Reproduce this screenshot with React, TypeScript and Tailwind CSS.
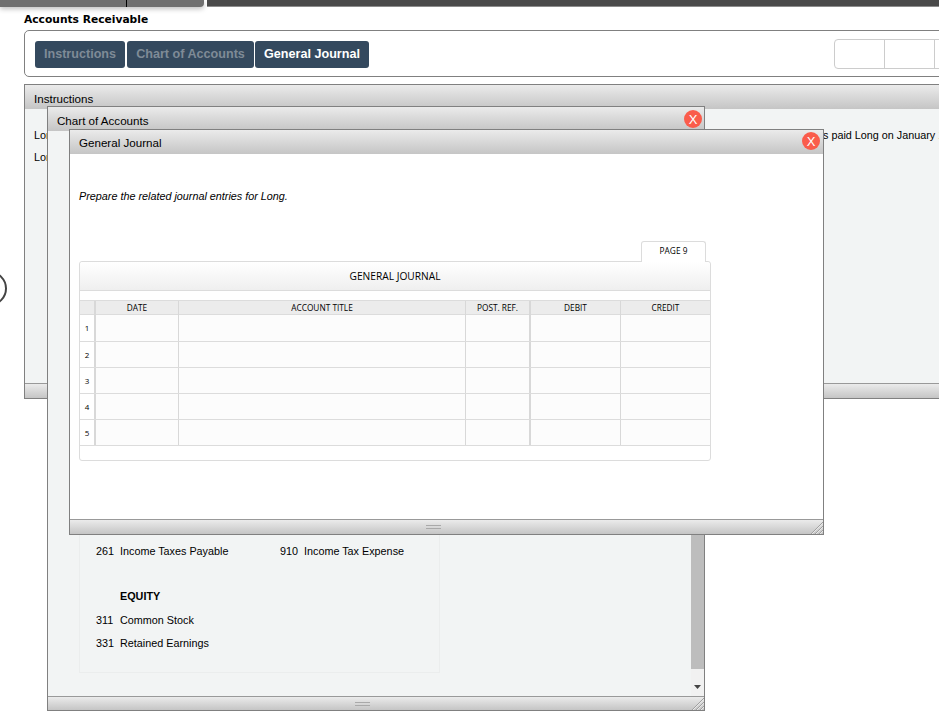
const ARIAL = "font-['Liberation_Sans',Arial,sans-serif]";

const ROWS = [1, 2, 3, 4, 5];

/* grid columns of the journal: line no, date, title, post ref, debit, credit */
const COLS = "grid grid-cols-[14px_2px_82px_1px_286px_1px_63px_2px_89px_1px_89px]";

function Grip() {
  return <div className="h-[4px] w-[15px] border-y border-[#a9a9a9]" />;
}

function Corner() {
  return (
    <svg viewBox="0 0 12 12" className="absolute right-0 bottom-0 size-[12px]">
      <path d="M0 12 12 0M4 12 12 4M8 12 12 8" stroke="#a0a0a0" strokeWidth="1" fill="none" />
      <path d="M1 12 12 1M5 12 12 5M9 12 12 9" stroke="#e8e8e8" strokeWidth="1" fill="none" />
    </svg>
  );
}

function CloseBtn({ className }: { className: string }) {
  return (
    <button
      className={`absolute flex size-[18px] items-center justify-center rounded-full bg-[#fa5c4b] text-[13px] leading-none text-white ${className}`}
    >
      X
    </button>
  );
}

function Win({
  title,
  closeClass,
  className,
  bodyClass,
  headerClass,
  footerClass,
  children,
}: {
  title: string;
  closeClass?: string;
  className: string;
  bodyClass: string;
  headerClass: string;
  footerClass: string;
  children: React.ReactNode;
}) {
  return (
    <section className={`absolute flex flex-col border border-[#808080] ${ARIAL} ${className}`}>
      <header
        className={`relative flex shrink-0 items-center bg-gradient-to-b from-[#ebebeb] to-[#c5c5c5] text-[11.6px] text-black ${headerClass}`}
      >
        {title}
        {closeClass && <CloseBtn className={closeClass} />}
      </header>
      <div className={`min-h-0 flex-1 overflow-hidden ${bodyClass}`}>{children}</div>
      <footer
        className={`relative flex shrink-0 items-center justify-center border-t border-[#999] bg-gradient-to-b from-[#ebebeb] to-[#c5c5c5] pr-[27px] ${footerClass}`}
      >
        <Grip />
        <Corner />
      </footer>
    </section>
  );
}

function Account({ no, name }: { no: string; name: string }) {
  return (
    <div className="flex w-[184px] shrink-0 text-[10.8px] leading-[13px] text-black">
      <span className="w-[24px] shrink-0">{no}</span>
      <span>{name}</span>
    </div>
  );
}

function Journal() {
  return (
    <div className="font-['Open_Sans',sans-serif] text-black">
      <div className="relative z-10 ml-[562px] flex h-[21px] w-[65px] items-center justify-center rounded-t-[3px] border-x border-t border-[#dcdcdc] bg-white pb-[2px] text-[8.3px]">
        PAGE 9
      </div>
      <div className="-mt-px w-[632px] rounded-[3px] border border-[#dcdcdc] bg-white">
        <div className="flex h-[29px] items-center justify-center rounded-t-[3px] border-b border-[#dcdcdc] bg-gradient-to-b from-white to-[#efefef] pt-[2px] text-[10.2px]">
          GENERAL JOURNAL
        </div>
        <div className={`mt-[9px] ${COLS} h-[15px] border-y border-[#dcdcdc] bg-[#ececec] text-center text-[8.3px] leading-[14px]`}>
          <span />
          <span className="bg-[#d8d8d8]" />
          <span>DATE</span>
          <span className="bg-[#d8d8d8]" />
          <span>ACCOUNT TITLE</span>
          <span className="bg-[#d8d8d8]" />
          <span>POST. REF.</span>
          <span className="bg-[#d8d8d8]" />
          <span>DEBIT</span>
          <span className="bg-[#d8d8d8]" />
          <span>CREDIT</span>
        </div>
        {ROWS.map((n) => (
          <div key={n} className={`${COLS} ${n === 1 ? "h-[27px]" : "h-[26px]"} border-b border-[#dcdcdc] bg-[#fcfcfc]`}>
            <span className="bg-white text-center text-[8px] leading-[25px]">{n}</span>
            <span className="bg-[#d8d8d8]" />
            <span />
            <span className="bg-[#d8d8d8]" />
            <span />
            <span className="bg-[#d8d8d8]" />
            <span />
            <span className="bg-[#d8d8d8]" />
            <span />
            <span className="bg-[#d8d8d8]" />
            <span />
          </div>
        ))}
        <div className="h-[14px]" />
      </div>
    </div>
  );
}

export default function App() {
  return (
    <div className="relative h-[718px] w-full overflow-hidden bg-white">
      {/* browser strip at the very top */}
      <div className="flex h-[7px] items-start">
        <div className="flex h-[7px] w-[204px] rounded-br-[4px] bg-[#707070] shadow-[0_2px_5px_rgba(0,0,0,0.25)]">
          <span className="ml-[126px] h-full w-px bg-black" />
        </div>
        <div className="ml-[3px] h-[7px] flex-1 border-b border-[#8c8c8c] bg-[#4a4a4a]" />
      </div>

      <div className="ml-[24px] w-[1000px]">
        <h1 className="mt-[6px] h-[17px] font-['DejaVu_Sans',Verdana,sans-serif] text-[10.7px] leading-[14px] font-bold text-black">
          Accounts Receivable
        </h1>
        <div className={`flex h-[47px] items-center rounded-[5px] border border-[#808080] pr-[37px] pl-[10px] ${ARIAL}`}>
          <div className="mt-[1px] flex gap-[2px] text-[12.6px] font-bold">
            <button className="h-[27px] w-[90px] rounded-[3px] bg-[#34495e] pt-px text-[#7f8b97]">Instructions</button>
            <button className="h-[27px] w-[127px] rounded-[3px] bg-[#34495e] pt-px text-[#7f8b97]">Chart of Accounts</button>
            <button className="-ml-px h-[27px] w-[114px] rounded-[3px] bg-[#34495e] pt-px text-white">General Journal</button>
          </div>
          <div className="ml-auto flex h-[30px] rounded-[4px] border border-[#cccccc]">
            <span className="w-[50px] border-r border-[#cccccc]" />
            <span className="w-[50px] border-r border-[#cccccc]" />
            <span className="w-[50px]" />
          </div>
        </div>
      </div>

      {/* half hidden circle on the left edge */}
      <div className="absolute top-[271px] left-[-28px] size-[35px] rounded-full border-2 border-[#444]" />

      <Win
        title="Instructions"
        className="top-[84px] left-[24px] h-[315px] w-[960px]"
        headerClass="h-[24px] pt-[3px] pl-[9px]"
        bodyClass="bg-[#f2f4f4] pt-[15px] pl-[9px] text-[10.8px] leading-[22px] text-black"
        footerClass="h-[15px]"
      >
        <p className="flex">
          <span className="w-[789px] shrink-0">Long</span>
          <span>s paid Long on January 1</span>
        </p>
        <p>Long</p>
      </Win>

      <Win
        title="Chart of Accounts"
        closeClass="top-[3px] right-[2px]"
        className="top-[106px] left-[47px] h-[605px] w-[658px]"
        headerClass="h-[24px] pt-[4px] pl-[9px]"
        bodyClass="relative bg-[#f2f4f4] pt-[23px] pl-[31px] flex flex-col justify-end"
        footerClass="h-[14px]"
      >
        <div className="mb-[23px] flex w-[361px] flex-col border border-[#ebeded] pt-[20px] pb-[22px] pl-[16px]">
          <div className="flex">
            <Account no="261" name="Income Taxes Payable" />
            <Account no="910" name="Income Tax Expense" />
          </div>
          <p className="mt-[32px] ml-[24px] text-[10.8px] leading-[13px] font-bold text-black">EQUITY</p>
          <div className="mt-[11px]">
            <Account no="311" name="Common Stock" />
          </div>
          <div className="mt-[10px]">
            <Account no="331" name="Retained Earnings" />
          </div>
        </div>
        {/* scrollbar */}
        <div className="absolute top-0 right-0 bottom-0 flex w-[13px] flex-col">
          <div className="flex-1 bg-[#bdbdbd]" />
          <div className="flex h-[27px] items-center justify-center bg-[#f1f1f1] pt-[9px]">
            <svg viewBox="0 0 7 4" className="h-[4px] w-[7px]">
              <path d="M0 0h7L3.5 4z" fill="#444" />
            </svg>
          </div>
        </div>
      </Win>

      <Win
        title="General Journal"
        closeClass="top-[2px] right-[3px]"
        className="top-[129px] left-[69px] h-[406px] w-[755px]"
        headerClass="h-[24px] pt-[2px] pl-[9px]"
        bodyClass="bg-white pl-[9px]"
        footerClass="h-[15px]"
      >
        <p className="mt-[35px] text-[10.8px] leading-[14px] text-black italic">Prepare the related journal entries for Long.</p>
        <div className="mt-[38px]">
          <Journal />
        </div>
      </Win>
    </div>
  );
}
